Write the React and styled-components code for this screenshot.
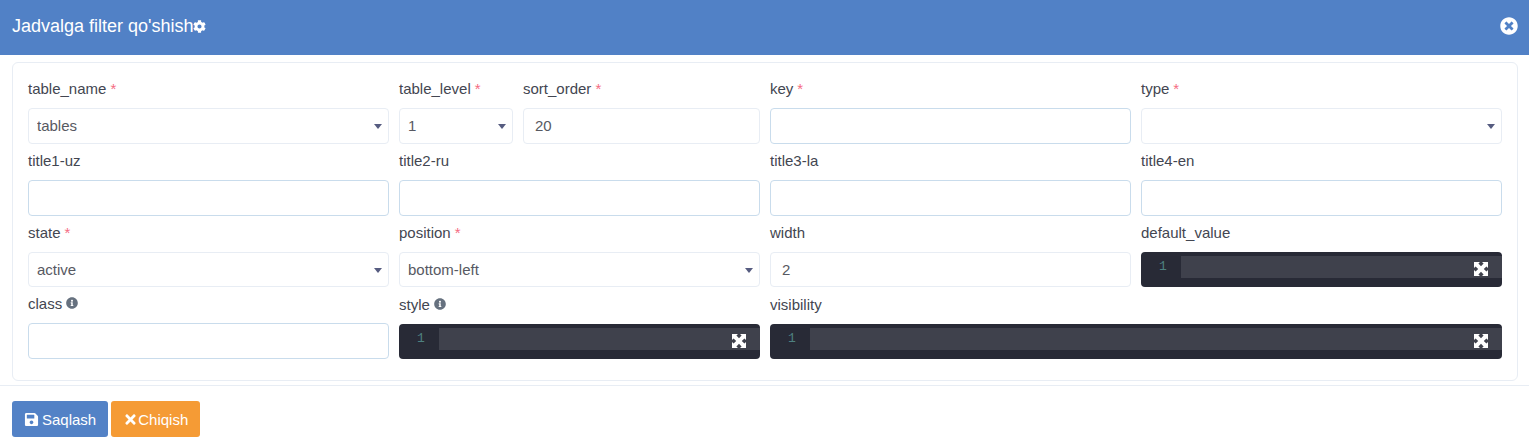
import styled, { createGlobalStyle } from "styled-components";
import { FaCog, FaTimesCircle, FaSave, FaTimes, FaInfoCircle } from "react-icons/fa";

const Global = createGlobalStyle`
  html, body { margin: 0; background: #fff; }
  body { font-family: "Liberation Sans", Arial, sans-serif; font-size: 15px; color: #575962; }
  * { box-sizing: border-box; }
`;

const Header = styled.header`
  height: 55px;
  background: #5181c6;
  color: #fff;
  display: flex;
  align-items: center;
  justify-content: space-between;
  padding: 0 11px 4px 12px;
`;

const Title = styled.h1`
  margin: 0;
  font-size: 18px;
  font-weight: 400;
  display: flex;
  align-items: center;
  padding-top: 1px;
  svg { font-size: 13px; margin-left: -1px; }
`;

const Close = styled.span`
  display: flex;
  font-size: 18px;
`;

const Body = styled.main`
  padding: 7px 11px 4px 12px;
`;

const Card = styled.section`
  border: 1px solid #e8edf4;
  border-radius: 6px;
  padding: 9px 15px 21px;
`;

const Grid = styled.div`
  display: grid;
  grid-template-columns: repeat(4, 361px);
  column-gap: 10px;
`;

const Field = styled.div`
  grid-column: span ${(p) => p.$span || 1};
  min-width: 0;
`;

const SplitField = styled.div`
  display: grid;
  grid-template-columns: 114px 237px;
  column-gap: 10px;
`;

const Label = styled.label`
  display: flex;
  align-items: center;
  height: ${(p) => (p.$tall ? 37 : 36)}px;
  color: #434651;
  font-size: 15px;
  white-space: pre;
  padding-bottom: ${(p) => (p.$tall ? 3 : 4)}px;
`;

const Star = styled.span`
  color: #f4516c;
  opacity: 0.85;
  margin-left: 4px;
`;

const Info = styled.span`
  display: flex;
  margin-left: 4px;
  color: #66717f;
  font-size: 12px;
`;

const Input = styled.input`
  display: block;
  width: 100%;
  height: ${(p) => p.$h || 36}px;
  padding: 0 11px ${(p) => (p.$h ? 0 : 2)}px;
  border: 1px solid ${(p) => (p.$plain ? "#e8edf4" : "#c9dcec")};
  border-radius: 4px;
  background: #fff;
  color: #575962;
  font: 15px "Liberation Sans", Arial, sans-serif;
  outline: none;
`;

const SelectWrap = styled.div`
  position: relative;
  height: ${(p) => p.$h || 36}px;
  &::after {
    content: "";
    position: absolute;
    right: 7px;
    top: 50%;
    margin-top: -2px;
    border-left: 4px solid transparent;
    border-right: 4px solid transparent;
    border-top: 5px solid #565c80;
  }
`;

const SelectBox = styled.select`
  appearance: none;
  display: block;
  width: 100%;
  height: 100%;
  padding: 0 20px ${(p) => (p.$short ? 0 : 2)}px 8px;
  border: 1px solid #e8edf4;
  border-radius: 4px;
  background: #fff;
  color: #575962;
  font: 15px "Liberation Sans", Arial, sans-serif;
  outline: none;
`;

const Editor = styled.div`
  position: relative;
  height: 35px;
  background: #282a36;
  border-radius: 4px;
  padding: 4px 0 9px 40px;
`;

const ActiveLine = styled.div`
  height: 22px;
  background: #3f414c;
`;

const LineNo = styled.span`
  position: absolute;
  left: 18px;
  top: 7px;
  font: 13px "Liberation Mono", monospace;
  color: #4e8080;
`;

const Expand = styled.svg`
  position: absolute;
  right: 14px;
  top: 10px;
  width: 14px;
  height: 14px;
`;

const Button = styled.button`
  display: flex;
  align-items: center;
  gap: ${(p) => p.$gap}px;
  height: 36px;
  padding: 0 12px;
  border: 0;
  border-radius: 3px;
  background: ${(p) => p.$bg};
  color: #fff;
  font: 15px "Liberation Sans", Arial, sans-serif;
  svg { font-size: 15px; }
`;

const Footer = styled.footer`
  border-top: 1px solid #e8edf4;
  padding: 15px 12px;
  display: flex;
  gap: 3px;
`;

const Select = ({ value, h }) => (
  <SelectWrap $h={h}>
    <SelectBox defaultValue={value} $short={!!h}>
      <option value={value}>{value}</option>
    </SelectBox>
  </SelectWrap>
);

const CodeEditor = () => (
  <Editor>
    <LineNo>1</LineNo>
    <ActiveLine />
    <Expand viewBox="0 0 14 14" fill="#fff">
      <path d="M0 0h6L4.4 1.6 7 4.2 9.6 1.6 8 0h6v6l-1.6-1.6L9.8 7l2.6 2.6L14 8v6H8l1.6-1.6L7 9.8l-2.6 2.6L6 14H0V8l1.6 1.6L4.2 7 1.6 4.4 0 6z" />
    </Expand>
  </Editor>
);

const Caption = ({ text, required, info, tall }) => (
  <Label $tall={tall}>
    {text}
    {required && <Star>*</Star>}
    {info && <Info><FaInfoCircle /></Info>}
  </Label>
);

export default function App() {
  return (
    <>
      <Global />
      <Header>
        <Title>Jadvalga filter qo'shish<FaCog /></Title>
        <Close><FaTimesCircle /></Close>
      </Header>
      <Body>
        <Card>
          <Grid>
            <Field>
              <Caption text="table_name" required />
              <Select value="tables" />
            </Field>
            <SplitField>
              <Field>
                <Caption text="table_level" required />
                <Select value="1" />
              </Field>
              <Field>
                <Caption text="sort_order" required />
                <Input $plain defaultValue="20" />
              </Field>
            </SplitField>
            <Field>
              <Caption text="key" required />
              <Input />
            </Field>
            <Field>
              <Caption text="type" required />
              <Select value="" />
            </Field>

            <Field><Caption text="title1-uz" /><Input /></Field>
            <Field><Caption text="title2-ru" /><Input /></Field>
            <Field><Caption text="title3-la" /><Input /></Field>
            <Field><Caption text="title4-en" /><Input /></Field>

            <Field><Caption text="state" required /><Select value="active" h={35} /></Field>
            <Field><Caption text="position" required /><Select value="bottom-left" h={35} /></Field>
            <Field><Caption text="width" /><Input $plain $h={35} defaultValue="2" /></Field>
            <Field><Caption text="default_value" /><CodeEditor /></Field>

            <Field><Caption text="class" info /><Input /></Field>
            <Field><Caption text="style" info tall /><CodeEditor /></Field>
            <Field $span={2}><Caption text="visibility" tall /><CodeEditor /></Field>
          </Grid>
        </Card>
      </Body>
      <Footer>
        <Button $bg="#5382c6" $gap={3}><FaSave />Saqlash</Button>
        <Button $bg="#f59b35" $gap={0}><FaTimes />Chiqish</Button>
      </Footer>
    </>
  );
}
